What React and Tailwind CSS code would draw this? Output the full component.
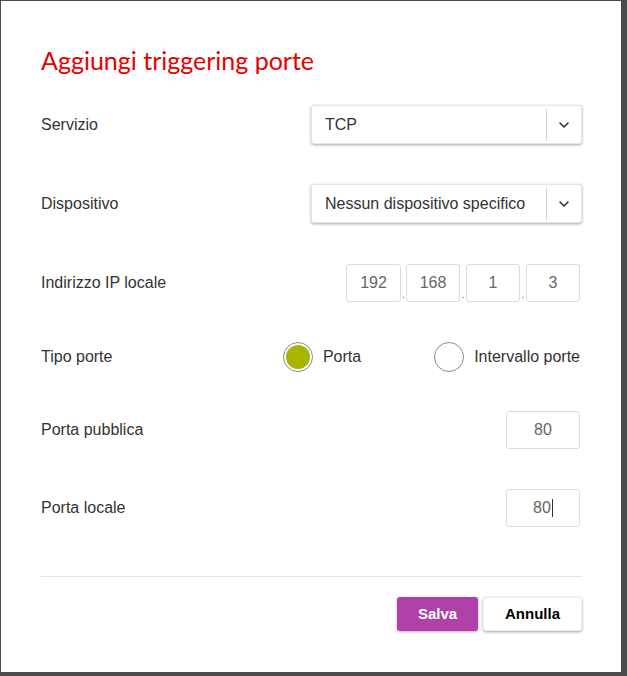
import React from 'react';

const Chevron = () => (
  <svg width="12" height="8" viewBox="0 0 12 8" fill="none">
    <path d="M2 2l4 4 4-4" stroke="#333" strokeWidth="1.6" strokeLinecap="round" strokeLinejoin="round" />
  </svg>
);

const Select = ({ value }) => (
  <div className="flex items-center w-[271px] h-[39px] bg-white rounded-[3px] border border-[#e6e6e6] shadow-[0_1px_3px_rgba(0,0,0,0.35)]">
    <span className="flex-1 pl-[13px] text-[16px] text-[#333]">{value}</span>
    <div className="w-px h-[32px] bg-[#d4d4d4]" />
    <div className="w-[34px] flex justify-center">
      <Chevron />
    </div>
  </div>
);

const Box = ({ value, w = 'w-[54px]', caret = false }) => (
  <div className={`${w} h-[38px] flex items-center justify-center rounded-[3px] border border-[#dcdcdc] text-[16px] text-[#666]`}>
    {value}
    {caret && <span className="inline-block w-px h-[18px] bg-[#333] ml-px" />}
  </div>
);

const Row = ({ label, className = '', children }) => (
  <div className={`flex items-center justify-between h-[39px] ${className}`}>
    <span className="text-[16px] text-[#333]">{label}</span>
    {children}
  </div>
);

export default function App() {
  return (
    <div className="w-[627px] h-[676px] bg-[#4b4b4b] pt-px pl-px font-['Liberation_Sans',Arial,sans-serif]">
      <div className="w-[620px] h-[671px] bg-white pt-[44px] pl-[40px] pr-[39px]">
        <h1 className="text-[25px] leading-[30px] text-[#e60000] font-['Lato',sans-serif]">Aggiungi triggering porte</h1>

        {/* form rows */}
        <Row label="Servizio" className="mt-[30px]">
          <Select value="TCP" />
        </Row>

        <Row label="Dispositivo" className="mt-[40px]">
          <Select value="Nessun dispositivo specifico" />
        </Row>

        <Row label="Indirizzo IP locale" className="mt-[40px]">
          <div className="flex items-end mr-[2px]">
            <Box value="192" w="w-[55px]" />
            <span className="w-[5px] text-center text-[#666] text-[10px] leading-[14px]">.</span>
            <Box value="168" />
            <span className="w-[6px] text-center text-[#666] text-[10px] leading-[14px]">.</span>
            <Box value="1" />
            <span className="w-[6px] text-center text-[#666] text-[10px] leading-[14px]">.</span>
            <Box value="3" />
          </div>
        </Row>

        <Row label="Tipo porte" className="mt-[35px]">
          <div className="flex items-center mr-[2px]">
            <div className="flex items-center gap-[10px]">
              <div className="w-[30px] h-[30px] rounded-full border border-[#8a8a8a] p-[2px]">
                <div className="w-full h-full rounded-full bg-[#a8b400]" />
              </div>
              <span className="text-[16px] text-[#333]">Porta</span>
            </div>
            <div className="flex items-center gap-[10px] ml-[73px]">
              <div className="w-[30px] h-[30px] rounded-full border border-[#8a8a8a]" />
              <span className="text-[16px] text-[#333]">Intervallo porte</span>
            </div>
          </div>
        </Row>

        <Row label="Porta pubblica" className="mt-[34px]">
          <Box value="80" w="w-[74px] mr-[2px]" />
        </Row>

        <Row label="Porta locale" className="mt-[39px]">
          <Box value="80" w="w-[74px] mr-[2px]" caret />
        </Row>

        <div className="mt-[49px] h-px bg-[#e5e5e5]" />

        <div className="flex justify-end gap-[5px] mt-[20px]">
          <button className="w-[81px] h-[34px] rounded-[3px] bg-[#b041a8] text-white text-[15px] font-bold shadow-[0_1px_3px_rgba(0,0,0,0.3)]">
            Salva
          </button>
          <button className="w-[99px] h-[34px] rounded-[3px] bg-white text-black text-[15px] font-bold border border-[#eee] shadow-[0_1px_3px_rgba(0,0,0,0.35)]">
            Annulla
          </button>
        </div>
      </div>
    </div>
  );
}
